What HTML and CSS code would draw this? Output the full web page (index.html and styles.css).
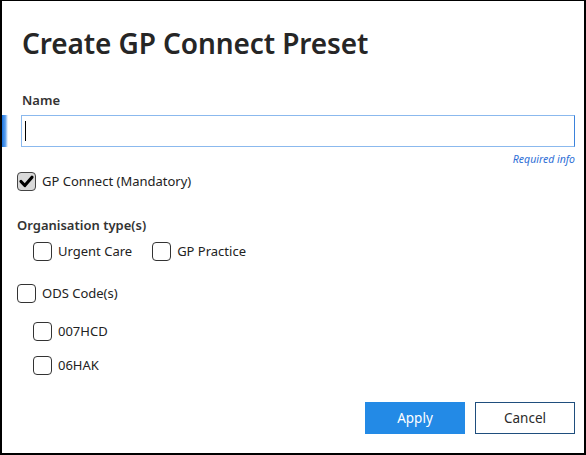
FILE: index.html
```html
<!DOCTYPE html>
<html>
<head>
<meta charset="utf-8">
<link rel="stylesheet" href="styles.css">
</head>
<body>
<div class="dialog">
  <h1 class="title">Create GP Connect Preset</h1>
  <div class="field">
    <div class="field-label">Name</div>
    <div class="input-wrap">
      <div class="input"><span class="caret"></span></div>
    </div>
    <div class="hint">Required info</div>
  </div>

  <label class="check main-check">
    <span class="box checked">
      <svg viewBox="0 0 19 19" width="19" height="19"><path d="M4 9.5 L7.8 13.5 L15 5.2" fill="none" stroke="#000" stroke-width="3.2" stroke-linecap="round" stroke-linejoin="round"/></svg>
    </span>
    <span class="check-text">GP Connect (Mandatory)</span>
  </label>

  <div class="group-label">Organisation type(s)</div>
  <div class="group-row">
    <label class="check"><span class="box"></span><span class="check-text">Urgent Care</span></label>
    <label class="check"><span class="box"></span><span class="check-text">GP Practice</span></label>
  </div>

  <label class="check ods-check"><span class="box"></span><span class="check-text">ODS Code(s)</span></label>
  <div class="sublist">
    <label class="check"><span class="box"></span><span class="check-text">007HCD</span></label>
    <label class="check"><span class="box"></span><span class="check-text">06HAK</span></label>
  </div>

  <div class="actions">
    <button class="btn btn-primary">Apply</button>
    <button class="btn btn-secondary">Cancel</button>
  </div>
</div>
</body>
</html>
```

FILE: styles.css
```css
html, body {
  margin: 0;
  padding: 0;
  background: #fff;
}
body {
  font-family: "Noto Sans", "Open Sans", sans-serif;
  color: #222;
}
.dialog {
  width: 586px;
  height: 455px;
  box-sizing: border-box;
  border: 2px solid #000;
  border-top-width: 1px;
  padding: 0 9px 0 15px;
  display: flex;
  flex-direction: column;
}
.title {
  margin: 23px 0 0 5px;
  font-size: 28px;
  font-weight: 600;
  line-height: 38px;
  color: #262626;
  letter-spacing: -0.1px;
}
.field {
  margin-top: 30px;
  margin-left: 4px;
}
.field-label {
  font-size: 13px;
  font-weight: 600;
  line-height: 17px;
  color: #333;
  margin-left: 1px;
}
.input-wrap {
  position: relative;
  margin-top: 6px;
}
.input-wrap::before {
  content: "";
  position: absolute;
  left: -19px;
  top: 0;
  width: 6px;
  height: 32px;
  background: linear-gradient(to right, #1a73e0, #5ea1ee 55%, #ffffff);
}
.input {
  height: 32px;
  box-sizing: border-box;
  border: 1px solid #8bb9ee;
  border-right-color: #3b82db;
  background: #fff;
  display: flex;
  align-items: center;
  padding-left: 3px;
}
.caret {
  width: 1px;
  height: 20px;
  background: #000;
}
.hint {
  text-align: right;
  font-size: 10.5px;
  font-style: italic;
  color: #2f6fd6;
  line-height: 14px;
  margin-top: 5px;
}
.check {
  display: flex;
  align-items: center;
  gap: 6px;
  font-size: 13px;
  color: #222;
  line-height: 19px;
}
.box {
  width: 19px;
  height: 19px;
  box-sizing: border-box;
  border: 1px solid #333;
  border-radius: 4px;
  background: #fff;
  display: flex;
  flex-shrink: 0;
}
.box.checked {
  background: #d9d9d9;
  border-color: #444;
}
.box svg {
  margin: -1px;
}
.main-check {
  margin-top: 6px;
  align-self: flex-start;
}
.group-label {
  margin-top: 26px;
  font-size: 13px;
  font-weight: 600;
  line-height: 17px;
  color: #333;
}
.group-row {
  display: flex;
  gap: 20px;
  margin-top: 8px;
  margin-left: 16px;
}
.ods-check {
  margin-top: 23px;
  align-self: flex-start;
}
.sublist {
  display: flex;
  flex-direction: column;
  gap: 15px;
  margin-top: 19px;
  margin-left: 16px;
  align-items: flex-start;
}
.actions {
  margin-top: auto;
  margin-bottom: 19px;
  display: flex;
  justify-content: flex-end;
  gap: 10px;
}
.btn {
  width: 100px;
  height: 32px;
  font-family: inherit;
  font-size: 13.5px;
  box-sizing: border-box;
  cursor: pointer;
}
.btn-primary {
  background: #238ae6;
  color: #fff;
  border: 1px solid #238ae6;
}
.btn-secondary {
  background: #fff;
  color: #2a2a2a;
  border: 1px solid #1f4e7d;
}
```
